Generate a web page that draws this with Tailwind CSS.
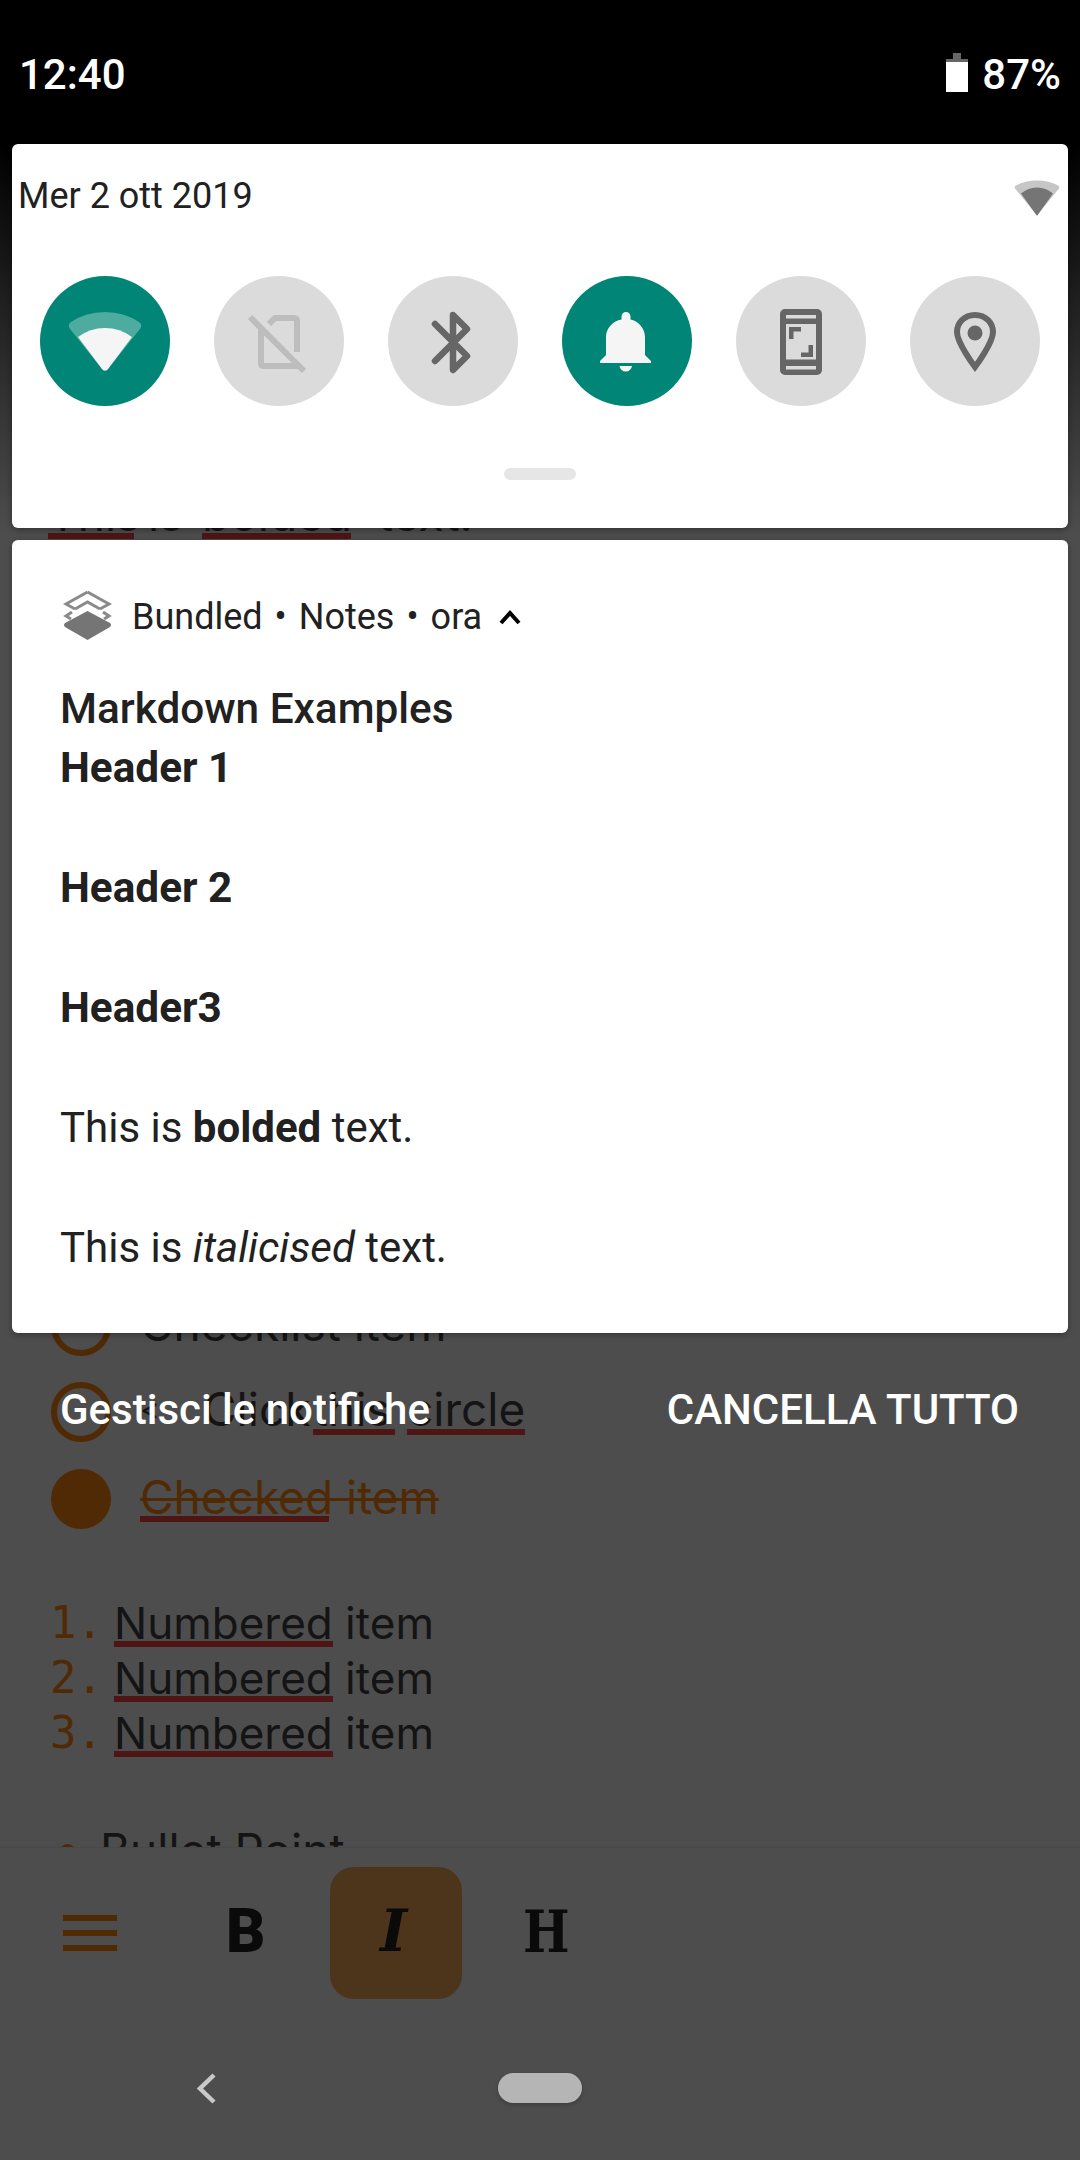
<!DOCTYPE html>
<html><head><meta charset="utf-8"><script src="https://cdn.jsdelivr.net/npm/@tailwindcss/browser@4"></script></head>
<body class="m-0 bg-[#4d4d4d]">
<div class="relative w-[1080px] h-[2160px] overflow-hidden bg-[#4d4d4d] font-['Roboto',sans-serif]">

  <!-- dimmed app underneath -->
  <div class="absolute inset-0 text-[#141414] text-[44px] leading-[60px] font-['Inter',sans-serif]">
    <div class="absolute left-[48px] top-[484px] flex text-[46px]">
      <span class="relative w-[100px]">This<span class="absolute left-0 top-[49px] w-[86px] h-[6px] bg-[#4f1414]"></span></span><span class="w-[54px]">is</span>
      <span class="relative w-[176px]">bolded<span class="absolute left-0 top-[49px] w-[149px] h-[6px] bg-[#4f1414]"></span></span><span>text.</span>
    </div>
    <div class="absolute left-[51px] top-[1294px] flex items-center gap-[29px] text-[46px]"><span class="w-[60px] h-[60px] rounded-full border-[6px] border-[#4f2a05]"></span><span class="mb-[4px]">Checklist item</span></div>
    <div class="absolute left-[51px] top-[1379px] flex items-center gap-[29px] text-[46px]"><span class="w-[60px] h-[60px] rounded-full border-[6px] border-[#4f2a05]"></span><span class="flex mb-[6px]"><span class="w-[63px] text-[30px]">&lt;</span><span class="w-[110px]">Click</span><span class="relative w-[94px]">this<span class="absolute left-0 top-[50px] w-[82px] h-[6px] bg-[#4f1414]"></span></span><span class="relative w-[118px]">circle<span class="absolute left-0 top-[50px] w-[118px] h-[6px] bg-[#4f1414]"></span></span></span></div>
    <div class="absolute left-[51px] top-[1467px] flex items-center gap-[29px] text-[46px]"><span class="w-[60px] h-[60px] rounded-full bg-[#4f2a05]"></span><span class="relative mb-[4px] text-[#4f2a05] line-through decoration-[3px]">Checked item<span class="absolute left-0 top-[49px] w-[189px] h-[6px] bg-[#4f1414]"></span></span></div>
    <div class="absolute left-[50px] top-[1595px] flex flex-col">
      <div class="flex h-[55px] items-center"><span class="w-[64px] text-[#4f2a05] font-['DejaVu_Sans_Mono',monospace]">1.</span><span class="relative">Numbered item<span class="absolute left-0 top-[48px] w-[219px] h-[6px] bg-[#4f1414]"></span></span></div>
      <div class="flex h-[55px] items-center"><span class="w-[64px] text-[#4f2a05] font-['DejaVu_Sans_Mono',monospace]">2.</span><span class="relative">Numbered item<span class="absolute left-0 top-[48px] w-[219px] h-[6px] bg-[#4f1414]"></span></span></div>
      <div class="flex h-[55px] items-center"><span class="w-[64px] text-[#4f2a05] font-['DejaVu_Sans_Mono',monospace]">3.</span><span class="relative">Numbered item<span class="absolute left-0 top-[48px] w-[219px] h-[6px] bg-[#4f1414]"></span></span></div>
    </div>
    <div class="absolute left-[60px] top-[1820px] flex items-center gap-[25px] text-[46px]"><span class="w-[15px] h-[15px] rounded-full bg-[#4f2a05] mt-[2px]"></span><span>Bullet Point</span></div>
  </div>

  <!-- toolbar -->
  <div class="absolute left-0 top-[1847px] w-full h-[313px] bg-[#4d4d4d] border-t border-[#484848]">
    <div class="absolute left-[63px] top-[67px] w-[54px] h-[36px] flex flex-col justify-between"><span class="h-[6px] bg-[#4f2a05]"></span><span class="h-[6px] bg-[#4f2a05]"></span><span class="h-[6px] bg-[#4f2a05]"></span></div>
    <div class="absolute left-[330px] top-[19px] w-[132px] h-[132px] rounded-[24px] bg-[#4d351c]"></div>
    <span class="absolute left-[226px] top-[39px] text-[61px] leading-[88px] font-black text-[#0a0a0a]">B</span>
    <span class="absolute left-[380px] top-[39px] text-[58px] leading-[88px] font-bold italic text-[#0a0a0a] font-['DejaVu_Serif',serif]">I</span>
    <span class="absolute left-[519px] top-[40px] text-[58px] leading-[88px] font-bold text-[#0a0a0a] font-['DejaVu_Serif',serif] scale-x-[0.85]">H</span>
  </div>

  <!-- nav bar -->
  <svg class="absolute left-[190px] top-[2068px]" width="34" height="40" viewBox="0 0 34 40"><path d="M24 7 L10 20.5 L24 34" fill="none" stroke="#c8c8c8" stroke-width="4.5"/></svg>
  <div class="absolute left-[498px] top-[2073px] w-[84px] h-[30px] rounded-full bg-[#b5b5b5] shadow-[0_2px_4px_rgba(0,0,0,0.2)]"></div>

  <!-- status bar scrim -->
  <div class="absolute left-0 top-0 w-full h-[144px] bg-black"></div>
  <div class="absolute left-0 top-[144px] w-full h-[390px] bg-gradient-to-b from-black to-black/0"></div>

  <!-- status bar -->
  <div class="absolute left-0 top-0 w-full h-[144px] flex items-start justify-between pl-[19px] pr-[19px] pt-[51px] text-white text-[42px] leading-[48px] font-medium">
    <span>12:40</span>
    <span class="flex items-center gap-[14px]">
      <svg class="mb-[6px]" width="22" height="39" viewBox="0 0 22 39"><rect x="7" y="0" width="8" height="6" fill="#666"/><rect x="0" y="6" width="22" height="3" fill="#666"/><rect x="0" y="9" width="22" height="30" fill="#fff"/></svg>
      <span>87%</span>
    </span>
  </div>

  <!-- quick settings -->
  <div class="absolute left-[12px] top-[144px] w-[1056px] h-[384px] rounded-[6px] bg-white shadow-[0_2px_6px_rgba(0,0,0,0.35)]">
    <div class="flex items-center justify-between pl-[6px] pr-[8px] pt-[31px] h-[73px]">
      <span class="text-[36px] leading-[40px] text-[#212121]">Mer 2 ott 2019</span>
      <svg class="mt-[4px]" width="46" height="36" viewBox="0 0 46 35"><path d="M23 35 L1 8 Q0 6 2 5 Q11 0 23 0 Q35 0 44 5 Q46 6 45 8Z" fill="#c6c6c6"/><path d="M7 13 Q14 7 23 7 Q32 7 39 13 L24 34 Q23 36 22 34Z" fill="#757575"/></svg>
    </div>
    <div class="flex justify-between pl-[28px] pr-[28px] mt-[59px]">
      <div class="w-[130px] h-[130px] rounded-full bg-[#008577]">
        <svg width="130" height="130" viewBox="0 0 130 130"><path d="M65 95 Q63 95 62 93 L30 53 Q27 49 31 46 Q46 36 65 36 Q84 36 99 46 Q103 49 100 53 L68 93 Q67 95 65 95Z" fill="#4dab9f"/><path d="M38 61 Q50 52 65 52 Q80 52 92 61 L68 93 Q65 96 62 93Z" fill="#f5f5f5"/></svg>
      </div>
      <div class="w-[130px] h-[130px] rounded-full bg-[#dbdbdb]">
        <svg width="130" height="130" viewBox="0 0 130 130"><g fill="none" stroke="#bdbdbd" stroke-width="6"><path d="M55 48 L61 42 H80 Q83 42 83 45 V76"/><path d="M47 54 V87 Q47 90 50 90 H84"/><path d="M36 41 L90 95"/></g></svg>
      </div>
      <div class="w-[130px] h-[130px] rounded-full bg-[#dbdbdb]">
        <svg width="130" height="130" viewBox="0 0 130 130"><path d="M47 48 L79 80 L65 94 V39 L79 53 L47 85" fill="none" stroke="#666" stroke-width="6.5" stroke-linecap="round" stroke-linejoin="round"/></svg>
      </div>
      <div class="w-[130px] h-[130px] rounded-full bg-[#008577]">
        <svg width="130" height="130" viewBox="0 0 130 130"><path d="M64 36 a4.5 4.5 0 0 0-4.5 4.5 V43.5 C51 45 44 52 44 61 V79 L38 85 V87 H89 V85 L83 79 V61 C83 52 76 45 68.5 43.5 V40.5 A4.5 4.5 0 0 0 64 36Z M57.5 90 H70 A6.3 6.3 0 0 1 57.5 90Z" fill="#f5f5f5"/></svg>
      </div>
      <div class="w-[130px] h-[130px] rounded-full bg-[#dbdbdb]">
        <svg width="130" height="130" viewBox="0 0 130 130"><path fill-rule="evenodd" d="M49 33 H81 A5 5 0 0 1 86 38 V94 A5 5 0 0 1 81 99 H49 A5 5 0 0 1 44 94 V38 A5 5 0 0 1 49 33Z M50 39 V42.5 H80 V39Z M50 48 V83.5 H80 V48Z M50 90 V93.5 H80 V90Z" fill="#666"/><path d="M53 51 H65 V55.5 H57.5 V63 H53Z M77 81 H65 V76.5 H72.5 V69 H77Z" fill="#666"/></svg>
      </div>
      <div class="w-[130px] h-[130px] rounded-full bg-[#dbdbdb]">
        <svg width="130" height="130" viewBox="0 0 130 130"><path d="M65 39 C54 39 47 47 47 56 C47 67 65 91 65 91 C65 91 83 67 83 56 C83 47 76 39 65 39Z" fill="none" stroke="#666" stroke-width="6"/><circle cx="65" cy="57" r="7.5" fill="#666"/></svg>
      </div>
    </div>
    <div class="w-[72px] h-[12px] rounded-[6px] bg-[#e6e6e6] mx-auto mt-[62px]"></div>
  </div>

  <!-- notification -->
  <div class="absolute left-[12px] top-[540px] w-[1056px] h-[793px] rounded-[6px] bg-white shadow-[0_2px_6px_rgba(0,0,0,0.3)] pl-[48px] text-[#212121]">
    <div class="flex items-center h-[54px] mt-[50px] text-[36px] leading-[54px]">
      <svg class="ml-[3px] self-start" width="49" height="50" viewBox="0 0 49 50"><path d="M24.5 21 L47 33 Q49 35 47 37 L24.5 50 L2 37 Q0 35 2 33Z" fill="#757575"/><g fill="none" stroke="#8a8a8a" stroke-width="3"><path d="M24.5 2 L46 14 L37 19 M12 19 L3 14 L24.5 2 M9 22 L3 26 L8 29 M40 22 L46 26 L41 29 M12 19 L24.5 12 L37 19"/></g></svg>
      <span class="ml-[20px]">Bundled</span><span class="mx-[12px]">•</span><span>Notes</span><span class="mx-[12px]">•</span><span>ora</span>
      <svg class="ml-[16px]" width="24" height="16" viewBox="0 0 24 16"><path d="M3 14 L12 4 L21 14" fill="none" stroke="#000" stroke-width="4"/></svg>
    </div>
    <div class="mt-[35px] text-[42.3px] leading-[60px]">
      <div class="font-medium -mb-px">Markdown Examples</div>
      <div class="font-bold">Header 1</div>
      <div class="h-[60px]"></div>
      <div class="font-bold">Header 2</div>
      <div class="h-[60px]"></div>
      <div class="font-bold">Header3</div>
      <div class="h-[60px]"></div>
      <div class="text-[42px]">This is <b class="font-bold">bolded</b> text.</div>
      <div class="h-[60px]"></div>
      <div class="text-[42px]">This is <i>italicised</i> text.</div>
    </div>
  </div>

  <!-- footer actions -->
  <div class="absolute left-[60px] right-[61px] top-[1382px] flex justify-between text-white text-[42px] leading-[56px] font-medium">
    <span>Gestisci le notifiche</span>
    <span>CANCELLA TUTTO</span>
  </div>
</div>
</body></html>
